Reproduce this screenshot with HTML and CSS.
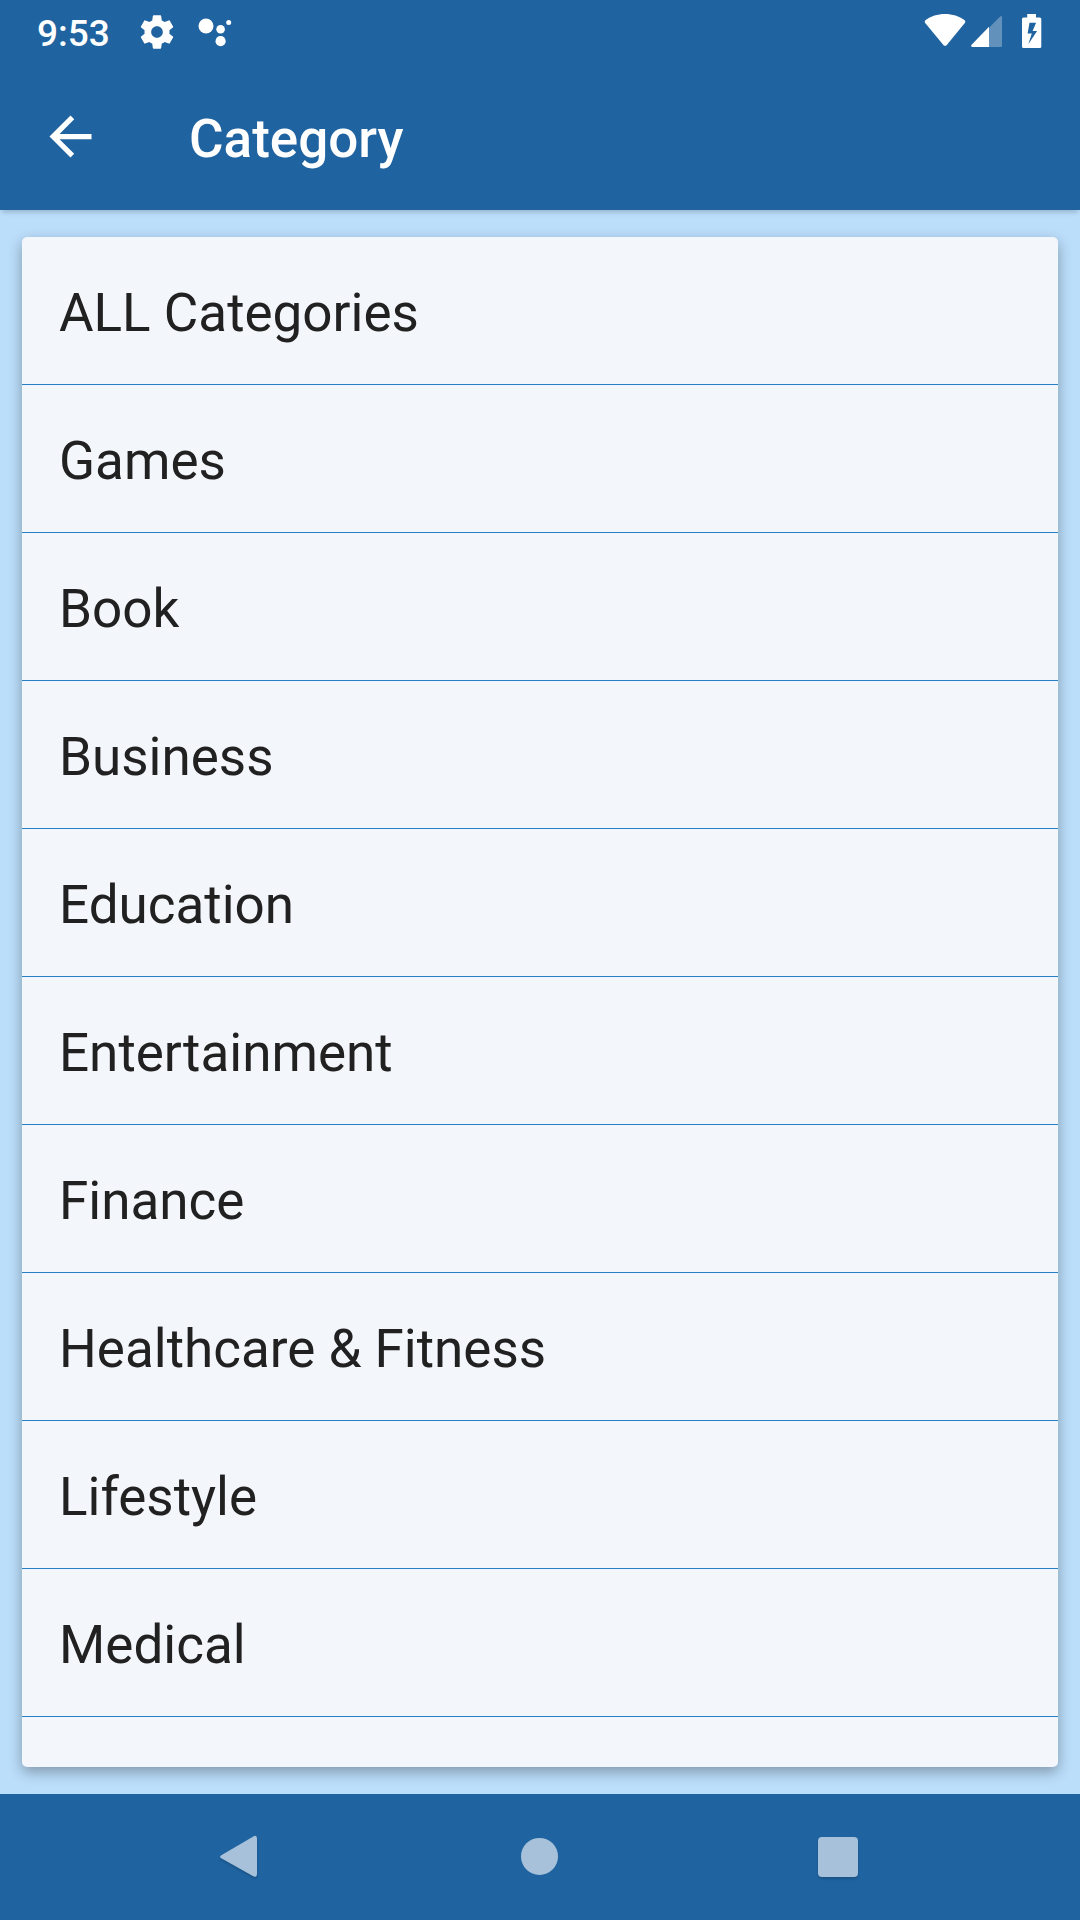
FILE: index.html
```html
<!DOCTYPE html>
<html lang="en">
<head>
  <meta charset="UTF-8">
  <meta name="viewport" content="width=device-width, initial-scale=1.0">
  <title>Category</title>
  <link rel="stylesheet" href="styles.css">
</head>
<body>
  <div class="status-bar">
    <span class="clock">9:53</span>
    <svg class="icon-gear" viewBox="0 0 24 24">
      <path d="M19.43 12.98c.04-.32.07-.64.07-.98s-.03-.66-.07-.98l2.11-1.65c.19-.15.24-.42.12-.64l-2-3.46c-.12-.22-.39-.3-.61-.22l-2.49 1c-.52-.4-1.08-.73-1.69-.98l-.38-2.65C14.46 2.18 14.25 2 14 2h-4c-.25 0-.46.18-.49.42l-.38 2.65c-.61.25-1.17.59-1.69.98l-2.49-1c-.23-.09-.49 0-.61.22l-2 3.46c-.13.22-.07.49.12.64l2.11 1.65c-.04.32-.07.65-.07.98s.03.66.07.98l-2.11 1.65c-.19.15-.24.42-.12.64l2 3.46c.12.22.39.3.61.22l2.49-1c.52.4 1.08.73 1.69.98l.38 2.65c.03.24.24.42.49.42h4c.25 0 .46-.18.49-.42l.38-2.65c.61-.25 1.17-.59 1.69-.98l2.49 1c.23.09.49 0 .61-.22l2-3.46c.12-.22.07-.49-.12-.64l-2.11-1.65zM12 15.5c-1.93 0-3.5-1.57-3.5-3.5s1.57-3.5 3.5-3.5 3.5 1.57 3.5 3.5-1.57 3.5-3.5 3.5z"/>
    </svg>
    <svg class="icon-assistant" viewBox="0 0 34 63">
      <circle cx="8" cy="26" r="7.5"/>
      <circle cx="22.6" cy="29.2" r="4.3"/>
      <circle cx="22.6" cy="41.2" r="5.1"/>
      <circle cx="30.7" cy="22.6" r="2.5"/>
    </svg>
    <svg class="icon-wifi" viewBox="0 0 42 63">
      <path d="M1.6 20.1C6.8 16.3 13.5 14 21 14s14.2 2.3 19.4 6.1c1 .8 1.2 1.9.4 2.9L22.8 44.9c-1 1.2-2.4 1.2-3.4 0L1.2 23c-.8-1-.6-2.1.4-2.9z"/>
    </svg>
    <svg class="icon-signal" viewBox="0 0 32 63">
      <path class="signal-off" d="M18 27.7L29 16.7q2-1.7 2 .8V45.500q0 1.500-1.500 1.500H18z"/>
      <path d="M18 26.700V47H1.200q-1.800-.8-.6-2.200z"/>
    </svg>
    <svg class="icon-battery" viewBox="0 0 20 63">
      <path fill-rule="evenodd" d="M5.200 14h8.800v3.600h3.800q1.500 0 1.500 1.500v27.300q0 1.500-1.500 1.500H1.500Q0 47.900 0 46.400V19.100q0-1.500 1.500-1.500h3.700zM7.500 22.700L5.600 33.500h4.200L6.300 44.300l8.800-13.200h-4.500l3.500-8.400z"/>
    </svg>
  </div>

  <header class="app-bar">
    <svg class="icon-back" viewBox="0 0 24 24">
      <path d="M20 11H7.830l5.590-5.590L12 4l-8 8 8 8 1.410-1.410L7.830 13H20v-2z"/>
    </svg>
    <h1>Category</h1>
  </header>

  <main>
    <ul class="category-list">
      <li>ALL Categories</li>
      <li>Games</li>
      <li>Book</li>
      <li>Business</li>
      <li>Education</li>
      <li>Entertainment</li>
      <li>Finance</li>
      <li>Healthcare &amp; Fitness</li>
      <li>Lifestyle</li>
      <li>Medical</li>
    </ul>
  </main>

  <nav class="nav-bar">
    <svg class="nav-icon" viewBox="0 0 60 60">
      <path d="M11.300 28.300L43.300 9.400Q47 7.700 47 11.500v35.500q0 4-3.700 2.200L11.300 31.300q-2.500-1.500 0-3z"/>
    </svg>
    <svg class="nav-icon nav-home" viewBox="0 0 60 60">
      <circle cx="30.500" cy="29.400" r="18.500"/>
    </svg>
    <svg class="nav-icon" viewBox="0 0 60 60">
      <rect x="10" y="10" width="40" height="40" rx="4"/>
    </svg>
  </nav>
</body>
</html>
```

FILE: styles.css
```css
:root {
  --primary: #1f63a0;
  --background: #bbdefb;
  --card: #f3f6fb;
  --divider: #2580c4;
  --text: #212121;
}

* {
  box-sizing: border-box;
}

body {
  margin: 0;
  height: 1920px;
  display: flex;
  flex-direction: column;
  overflow: hidden;
  background-color: var(--background);
  color: var(--text);
  font-family: Roboto, sans-serif;
}

svg {
  display: block;
  flex: none;
  fill: white;
}

.status-bar {
  display: flex;
  align-items: center;
  flex: none;
  height: 63px;
  padding: 0 38px 0 37px;
  background-color: var(--primary);
  color: white;
}

.clock {
  width: 100px;
  padding-top: 3px;
  font-size: 37px;
  font-weight: 500;
}

.icon-gear {
  width: 40px;
  height: 40px;
}

.icon-assistant {
  width: 34px;
  height: 63px;
  margin-left: 21px;
}

.icon-wifi {
  width: 42px;
  height: 63px;
  margin-left: auto;
}

.icon-signal {
  width: 32px;
  height: 63px;
  margin-left: 5px;
}

.signal-off {
  opacity: 0.3;
}

.icon-battery {
  width: 20px;
  height: 63px;
  margin-left: 19px;
}

.app-bar {
  display: flex;
  align-items: center;
  flex: none;
  height: 147px;
  padding: 0 39px;
  background-color: var(--primary);
  color: white;
  box-shadow: 0 4px 5px -2px rgba(0, 0, 0, 0.2);
}

.icon-back {
  width: 63px;
  height: 63px;
  margin-top: -1px;
}

.app-bar h1 {
  margin: 5px 0 0 87px;
  font-size: 53px;
  font-weight: 500;
}

main {
  flex: 1;
  min-height: 0;
  padding: 27px 22px;
}

.category-list {
  height: 100%;
  margin: 0;
  padding: 0;
  overflow: hidden;
  list-style: none;
  background-color: var(--card);
  border-radius: 5px;
  box-shadow: 0 5px 14px rgba(0, 0, 0, 0.32);
}

.category-list li {
  display: flex;
  align-items: center;
  height: 148px;
  padding: 5px 37px 0;
  border-bottom: 1px solid var(--divider);
  font-size: 53px;
}

.nav-bar {
  display: flex;
  justify-content: space-between;
  align-items: center;
  flex: none;
  height: 126px;
  padding: 0 212px 0 210px;
  background-color: var(--primary);
}

.nav-icon {
  width: 60px;
  height: 60px;
  fill: #a6c1d9;
  filter: drop-shadow(0 2px 1px rgba(0, 0, 0, 0.15));
}

.nav-home {
  filter: none;
}
```
